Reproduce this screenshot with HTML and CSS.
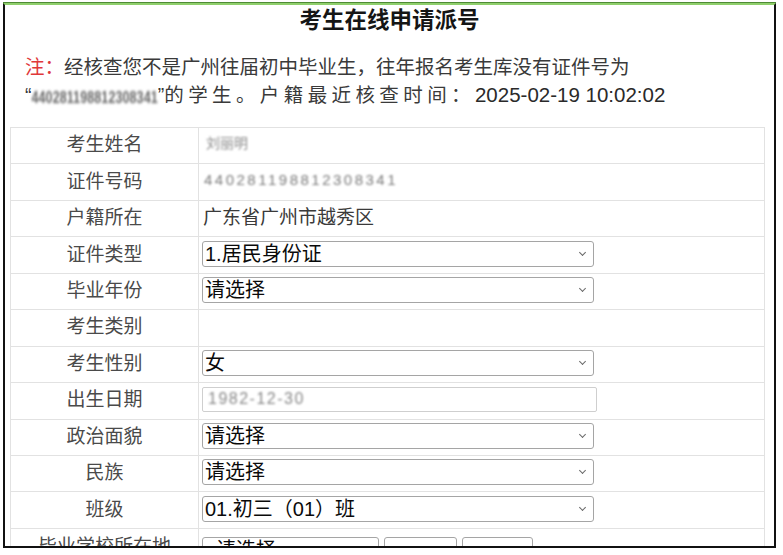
FILE: index.html
```html
<!DOCTYPE html>
<html lang="zh-CN">
<head>
<meta charset="utf-8">
<title>考生在线申请派号</title>
<link rel="stylesheet" href="styles.css">
</head>
<body>
<div class="frame">
  <h1 class="title">考生在线申请派号</h1>
  <p class="note"><span class="note-mark">注：</span>经核查您不是广州往届初中毕业生，往年报名考生库没有证件号为<br>“<span class="blur blur-id">440281198812308341</span>”<span class="spaced">的学生。户籍最近核查时间：</span><span class="stamp">2025-02-19 10:02:02</span></p>
  <table class="form">
    <tr><td class="label">考生姓名</td><td class="value"><span class="blur blur-name">刘丽明</span></td></tr>
    <tr><td class="label">证件号码</td><td class="value"><span class="blur blur-num">440281198812308341</span></td></tr>
    <tr><td class="label">户籍所在</td><td class="value"><span class="plain">广东省广州市越秀区</span></td></tr>
    <tr><td class="label">证件类型</td><td class="value"><span class="sel-wrap"><select class="sel"><option>1.居民身份证</option></select></span></td></tr>
    <tr><td class="label">毕业年份</td><td class="value"><span class="sel-wrap"><select class="sel"><option>请选择</option></select></span></td></tr>
    <tr><td class="label">考生类别</td><td class="value"></td></tr>
    <tr><td class="label">考生性别</td><td class="value"><span class="sel-wrap"><select class="sel"><option>女</option></select></span></td></tr>
    <tr><td class="label">出生日期</td><td class="value"><div class="date"><span class="blur blur-date">1982-12-30</span></div></td></tr>
    <tr><td class="label">政治面貌</td><td class="value"><span class="sel-wrap"><select class="sel"><option>请选择</option></select></span></td></tr>
    <tr><td class="label">民族</td><td class="value"><span class="sel-wrap"><select class="sel"><option>请选择</option></select></span></td></tr>
    <tr><td class="label">班级</td><td class="value"><span class="sel-wrap"><select class="sel"><option>01.初三（01）班</option></select></span></td></tr>
    <tr><td class="label">毕业学校所在地</td><td class="value"><div class="multi"><span class="sel-wrap"><select class="sel sel-a"><option>&nbsp;&nbsp;请选择</option></select></span><span class="sel-wrap"><select class="sel sel-b"><option></option></select></span><span class="sel-wrap"><select class="sel sel-c"><option></option></select></span></div></td></tr>
    <tr><td class="label">毕业学校</td><td class="value"></td></tr>
  </table>
</div>
</body>
</html>
```
FILE: styles.css
```css
html, body {
  margin: 0;
  padding: 0;
  background: #ffffff;
}

body {
  font-family: "Liberation Sans", "Noto Sans CJK SC", sans-serif;
  color: #333;
}

.frame {
  margin: 3px 0 0 3px;
  width: 773px;
  height: 545px;
  box-sizing: border-box;
  border: 2px solid #111;
  border-top: 2px solid #8fcf6c;
  box-shadow: 0 -1px 0 #4f8a36;
  overflow: hidden;
  background: #fff;
}

.title {
  margin: 0;
  padding-top: 1px;
  line-height: 30px;
  height: 30px;
  text-align: center;
  font-size: 22.5px;
  font-weight: 700;
  color: #151515;
}

.note {
  margin: 17px 0 0 0;
  padding-left: 20px;
  font-size: 19.5px;
  line-height: 28px;
  color: #3a3a3a;
}

.note-mark {
  color: #e0383a;
}

.spaced {
  letter-spacing: 4.4px;
}

.stamp {
  font-size: 20.5px;
  color: #2a2a2a;
}

.blur {
  filter: blur(1.3px);
  color: #8a8a8a;
}

.blur-id {
  display: inline-block;
  font-size: 12.5px;
  font-weight: 700;
  letter-spacing: 0.1px;
  color: #666;
  transform: scaleY(1.35);
}

.form {
  margin: 15px 0 0 5px;
  width: 755px;
  border-collapse: collapse;
  border: 1px solid #dedede;
}

.form tr {
  height: 36.45px;
}

.form td {
  border: 1px solid #e2e2e2;
  padding: 0 0 3px 0;
  vertical-align: middle;
}

.label {
  width: 187px;
  text-align: center;
  font-size: 19px;
  color: #4a4a4a;
  padding-bottom: 6px !important;
}

.value {
  padding-left: 3px !important;
  font-size: 19px;
  color: #3a3a3a;
}

.plain {
  display: inline-block;
  padding-left: 1px;
  position: relative;
  top: -2px;
}

.blur-name {
  font-size: 14px;
  padding-left: 4px;
  color: #8c8c8c;
  position: relative;
  top: -2px;
}

.blur-num {
  font-size: 15px;
  padding-left: 2px;
  color: #7a7a7a;
  letter-spacing: 2.5px;
  position: relative;
  top: -2px;
}

.sel-wrap {
  position: relative;
  display: inline-block;
  vertical-align: middle;
}

.sel-wrap::after {
  content: "";
  position: absolute;
  right: 9px;
  top: 9px;
  width: 4px;
  height: 4px;
  border-right: 1.5px solid #6a6a6a;
  border-bottom: 1.5px solid #6a6a6a;
  transform: rotate(45deg);
  pointer-events: none;
}

.sel {
  display: block;
  width: 392px;
  height: 26px;
  margin: 0;
  padding: 0 0 0 2px;
  box-sizing: border-box;
  border: 1px solid #a5a5a5;
  border-radius: 3px;
  background-color: #fff;
  appearance: none;
  -webkit-appearance: none;
  font-family: "Liberation Sans", "Noto Sans CJK SC", sans-serif;
  font-size: 20px;
  line-height: 24px;
  color: #0a0a0a;
}

.date {
  width: 395px;
  height: 25px;
  box-sizing: border-box;
  border: 1px solid #cfcfcf;
  border-radius: 2px;
  padding-left: 5px;
  display: flex;
  align-items: center;
}

.blur-date {
  font-size: 16px;
  letter-spacing: 1.5px;
  color: #888;
}

.multi {
  display: flex;
  gap: 5px;
  padding-top: 8px;
}

.sel-a {
  width: 177px;
}

.sel-b {
  width: 73px;
}

.sel-c {
  width: 71px;
}
```
